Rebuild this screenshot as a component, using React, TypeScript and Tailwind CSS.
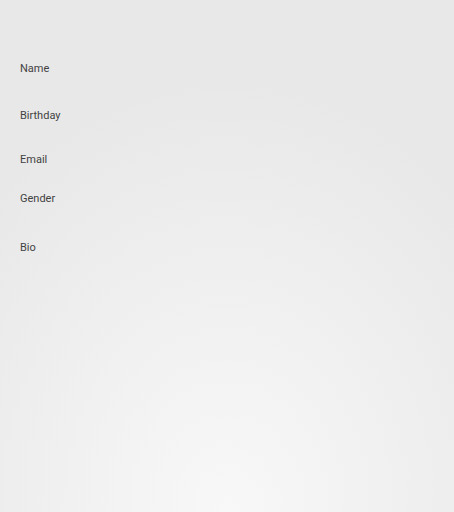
const fields = [
  { label: "Name", gap: "mt-0" },
  { label: "Birthday", gap: "mt-[31px]" },
  { label: "Email", gap: "mt-[28px]" },
  { label: "Gender", gap: "mt-[23px]" },
  { label: "Bio", gap: "mt-[33px]" },
];

export default function App() {
  return (
    <div
      className="w-full h-[512px] overflow-hidden bg-[#e8e8e8] bg-[radial-gradient(ellipse_75%_85%_at_50%_100%,#f8f8f8_0%,#f1f1f1_45%,#e8e8e8_100%)]"
      style={{ fontFamily: "Roboto, 'Liberation Sans', sans-serif" }}
    >
      <form className="flex flex-col px-5 pt-[61px]">
        {fields.map((f) => (
          <label key={f.label} className={`${f.gap} text-[11px] leading-4 text-[#424242]`}>
            {f.label}
          </label>
        ))}
      </form>
    </div>
  );
}
